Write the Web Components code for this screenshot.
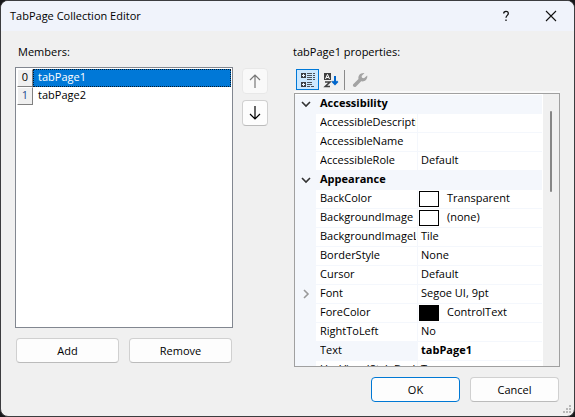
<!DOCTYPE html>
<html lang="en">
<head>
<meta charset="utf-8">
<title>TabPage Collection Editor</title>
<style>
  html, body { height: 100%; margin: 0; }
  body { background: #17171a; font: 11px/16px "Open Sans", "Noto Sans", sans-serif; color: #000; }
</style>
</head>
<body>
<dialog-window heading="TabPage Collection Editor">
  <collection-editor></collection-editor>
</dialog-window>

<script>
const define = (name, html, setup) => {
  const template = document.createElement('template');
  template.innerHTML = `<style>*{box-sizing:border-box}</style>` + html;
  customElements.define(name, class extends HTMLElement {
    connectedCallback() {
      if (this.shadowRoot) return;
      const root = this.attachShadow({ mode: 'open' });
      root.append(template.content.cloneNode(true));
      if (setup) setup(this, root);
    }
  });
};

define('push-button', `
<style>
  :host { display: block; min-width: 0; height: 25px; }
  button { width: 100%; height: 100%; padding: 0; font: inherit; color: #000; background: #fdfdfd;
    border: 1px solid #d0d0d0; border-bottom-color: #bbb; border-radius: 4px;
    display: flex; align-items: center; justify-content: center; }
  :host([primary]) button { border-color: #0078d4; }
  button:disabled { color: #777; background: #f9f9f9; border-color: #e8e8e8; }
</style>
<button type="button"><slot></slot></button>`, (host, root) => {
  const button = root.querySelector('button');
  button.disabled = host.hasAttribute('disabled');
  if (host.hasAttribute('label')) button.setAttribute('aria-label', host.getAttribute('label'));
});

define('member-list', `
<style>
  :host { display: block; background: #fff; border: 1px solid #828790; padding: 1px; min-height: 0; }
  ul { list-style: none; margin: 0; padding: 0; }
  li { display: flex; height: 18px; line-height: 14px; }
  .index { width: 16px; text-align: center; background: #f0f0f0; border: 1px solid #fff;
    border-right-color: #808080; border-bottom-color: #808080; }
  .name { flex: 1; padding-left: 4px; border: 1px solid transparent; }
  [aria-selected=true] .name { background: #0078d7; color: #fff; border: 1px dotted #06192b; }
  [aria-selected=false] .index { color: #1d4b8f; }
</style>
<ul role="listbox" aria-label="Members">
  <li role="option" aria-selected="true"><span class="index">0</span><span class="name">tabPage1</span></li>
  <li role="option" aria-selected="false"><span class="index">1</span><span class="name">tabPage2</span></li>
</ul>`);

define('tool-bar', `
<style>
  :host { display: flex; align-items: center; height: 25px; padding: 0 2px; border-bottom: 2px solid #f9f9f9; }
  button { width: 23px; height: 21px; padding: 0; border: 1px solid transparent; background: none; display: grid; place-items: center; }
  button[aria-pressed=true] { background: #cce8ff; border-color: #0078d7; }
  i { width: 1px; height: 20px; background: #8a8a8a; margin: 0 3px 0 2px; }
  svg { display: block; }
</style>
<button type="button" aria-label="Categorized" aria-pressed="true">
  <svg width="16" height="16" shape-rendering="crispEdges">
    <path d="M1 1h5v5H1zM1 10h5v5H1z" fill="#3b3f46"/>
    <path d="M2 3h3v1H2zM3 2h1v3H3zM2 12h3v1H2zM3 11h1v3H3z" fill="#eaf5ff"/>
    <path d="M7 1h5v1H7zM13 1h2v1h-2zM7 3h5v1H7zM13 3h2v1h-2zM7 5h5v1H7zM13 5h2v1h-2zM7 7h5v1H7zM13 7h2v1h-2zM7 10h5v1H7zM7 12h5v1H7zM7 14h3v1H7zM11 14h3v1h-3z" fill="#4c535c"/>
  </svg>
</button>
<button type="button" aria-label="Alphabetical" aria-pressed="false">
  <svg width="16" height="16">
    <path d="M1 1h7v7H1z" fill="#3f3f3f"/>
    <path d="M2.500 7 4.500 2.400 6.500 7M3.200 5.500h2.600" fill="none" stroke="#fff"/>
    <path d="M2 10h5L2.300 14.500H7" fill="none" stroke="#3f3f3f" stroke-width="1.600"/>
    <path d="M12 4v8M9.300 9.300 12 12l2.700-2.700" fill="none" stroke="#0066cc" stroke-width="2"/>
  </svg>
</button>
<i></i>
<button type="button" aria-label="Property pages" disabled>
  <svg width="16" height="16">
    <path d="M1.200 12.300 6.500 7C5.800 3.500 8.500.4 12.500 1L9.600 3.900l.4 1.900 2 .5L15.200 3.500c.8 3.800-2.600 6.600-6 5.800l-5.400 5.400c-1.600 1.200-3.800-.8-2.600-2.400z" fill="#a3a3a3"/>
  </svg>
</button>`);

const rows = [
  { category: 'Accessibility' },
  { name: 'AccessibleDescription', value: '' },
  { name: 'AccessibleName', value: '' },
  { name: 'AccessibleRole', value: 'Default' },
  { category: 'Appearance' },
  { name: 'BackColor', value: 'Transparent', swatch: '#fff' },
  { name: 'BackgroundImage', value: '(none)', swatch: '#fff' },
  { name: 'BackgroundImageLayout', value: 'Tile' },
  { name: 'BorderStyle', value: 'None' },
  { name: 'Cursor', value: 'Default' },
  { name: 'Font', value: 'Segoe UI, 9pt', expandable: true },
  { name: 'ForeColor', value: 'ControlText', swatch: '#000' },
  { name: 'RightToLeft', value: 'No' },
  { name: 'Text', value: 'tabPage1', current: true },
  { name: 'UseVisualStyleBackColor', value: 'True' }
];

define('property-grid', `
<style>
  :host { display: flex; min-height: 0; overflow: hidden; border: 1px solid #a0a0a0; background: #fff; }
  .view { flex: 1; min-width: 0; overflow: hidden; padding: 1px 1px 0 0; }
  table { width: 100%; table-layout: fixed; border-collapse: separate; border-spacing: 0; line-height: 16px; }
  th, td { height: 19px; padding: 0; text-align: left; vertical-align: top; font-weight: 400; white-space: nowrap; overflow: hidden; border-bottom: 1px solid #f4f7fc; }
  .gutter, .category { background: #f4f7fc; }
  .gutter { vertical-align: middle; }
  .category, .set { font-weight: 700; }
  .name { padding-left: 4px; border-right: 1px solid #f4f7fc; }
  .name span { display: block; overflow: hidden; margin-right: 1px; }
  .value { padding-left: 3px; }
  .category { padding-left: 4px; }
  .current .name { background: #f4f7fc; }
  .swatched { padding-left: 1px; }
  .swatched div { display: flex; gap: 8px; padding-top: 1px; height: 18px; }
  .swatched span { line-height: 14px; }
  .swatched i { width: 20px; height: 16px; border: 1px solid #000; }
  svg { display: block; margin: 0 auto; }
  .scroll { width: 16px; background: #f0f0f0; padding-top: 17px; }
  .thumb { width: 2px; height: 81px; margin-left: 7px; border-radius: 1px; background: #868686; }
</style>
<div class="view"><table aria-label="tabPage1 properties">
  <colgroup><col style="width:21px"><col style="width:102px"><col></colgroup><tbody></tbody>
</table></div>
<div class="scroll"><div class="thumb"></div></div>`, (host, root) => {
  const icon = (d, color) => `<svg width="10" height="10" fill="none" stroke="${color}" stroke-width="1.600"><path d="${d}"/></svg>`;
  root.querySelector('tbody').innerHTML = rows.map(r => r.category
    ? `<tr><td class="gutter">${icon('M1 3l4 4 4-4', '#333')}</td><th class="category" colspan="2" scope="rowgroup">${r.category}</th></tr>`
    : `<tr class="${r.current ? 'current' : ''}"><td class="gutter">${r.expandable ? icon('M3 1l4 4-4 4', '#999') : ''}</td>` +
      `<th class="name" scope="row"><span>${r.name}</span></th>` +
      (r.swatch
        ? `<td class="swatched"><div><i style="background:${r.swatch}"></i><span>${r.value}</span></div></td></tr>`
        : `<td class="value ${r.current ? 'set' : ''}">${r.value}</td></tr>`)).join('');
});

define('collection-editor', `
<style>
  :host { flex: 1; min-height: 0; display: flex; flex-direction: column; padding: 13px 14px 14px; gap: 10px; }
  .panes { flex: 1; min-height: 0; display: grid; column-gap: 9px; grid-template-columns: minmax(0, 218fr) 26px minmax(0, 283fr); }
  .pane { display: flex; flex-direction: column; min-width: 0; min-height: 0; }
  .caption { height: 23px; padding: 0 3px; white-space: nowrap; }
  .members member-list { flex: 1; }
  .pair { display: grid; grid-template-columns: 1fr 1fr; gap: 10px; padding: 10px 1px 4px; }
  .order { padding-top: 24px; gap: 6px; }
  .order push-button { height: 26px; }
  .props { padding-left: 17px; }
  .props .caption { height: 24px; padding: 0; margin-left: -1px; }
  property-grid { flex: 1; }
  .footer { display: flex; justify-content: flex-end; gap: 10px; padding-right: 1px; }
  .footer push-button { width: 89px; }
</style>
<div class="panes">
  <div class="pane members">
    <div class="caption">Members:</div>
    <member-list></member-list>
    <div class="pair"><push-button>Add</push-button><push-button>Remove</push-button></div>
  </div>
  <div class="pane order">
    <push-button label="Move up" disabled><svg width="16" height="16" fill="none" stroke="currentColor" stroke-width="1.200"><path d="M8 15V2M3 7l5-5 5 5"/></svg></push-button>
    <push-button label="Move down"><svg width="16" height="16" fill="none" stroke="currentColor" stroke-width="1.200"><path d="M8 1v13M3 9l5 5 5-5"/></svg></push-button>
  </div>
  <div class="pane props">
    <div class="caption">tabPage1 properties:</div>
    <tool-bar></tool-bar>
    <property-grid></property-grid>
  </div>
</div>
<div class="footer"><push-button primary>OK</push-button><push-button>Cancel</push-button></div>`);

define('dialog-window', `
<style>
  :host { display: flex; flex-direction: column; height: 100vh; box-sizing: border-box; position: relative;
    background: #f0f0f0; border: 1px solid #3c3c3f; border-radius: 8px; overflow: hidden; }
  header { display: flex; align-items: center; height: 30px; flex: none; background: #f0f3fb; padding: 0 9px; }
  h1 { flex: 1; margin: 0; font: inherit; }
  header button { width: 28px; height: 28px; padding: 0; border: 0; background: none; display: grid; place-items: center; }
  .help { margin-right: 17px; }
  .grip { position: absolute; right: 2px; bottom: 2px; }
</style>
<header>
  <h1></h1>
  <button class="help" type="button" aria-label="Help"><svg width="10" height="12" fill="none" stroke="#111" stroke-width="1.300"><path d="M2.700 3.500C2.700.6 7.300.6 7.300 3.400 7.300 5.300 5 5.500 5 7.800M5 9.400v1.600"/></svg></button>
  <button type="button" aria-label="Close"><svg width="12" height="12" fill="none" stroke="#111" stroke-width="1.100"><path d="M1 1l10 10M11 1L1 11"/></svg></button>
</header>
<slot></slot>
<svg class="grip" width="9" height="9" fill="#b8b8b8" shape-rendering="crispEdges" aria-hidden="true"><path d="M6 0h2v2H6zM3 3h2v2H3zM6 3h2v2H6zM0 6h2v2H0zM3 6h2v2H3zM6 6h2v2H6z"/></svg>`,
(host, root) => { root.querySelector('h1').textContent = host.getAttribute('heading'); });
</script>
</body>
</html>
